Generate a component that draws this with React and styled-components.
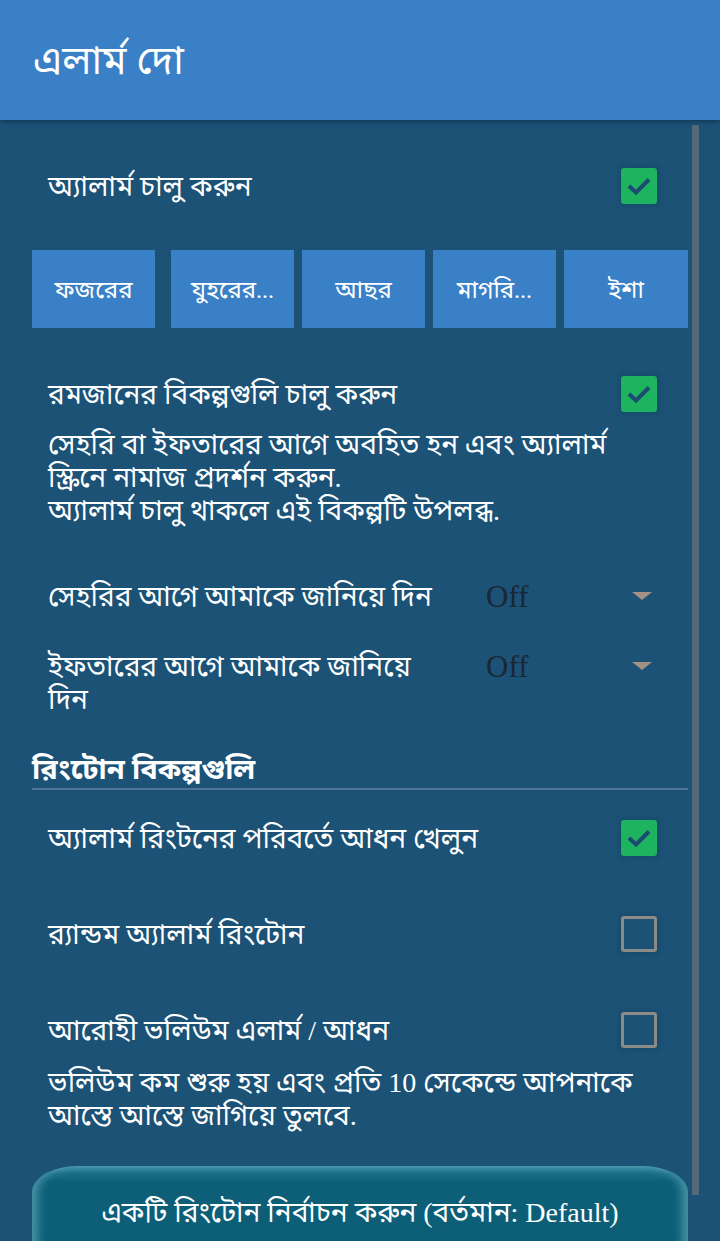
import React from "react";
import styled, { createGlobalStyle } from "styled-components";

const Global = createGlobalStyle`
  html, body { margin: 0; padding: 0; }
  body {
    background: #1b5276;
    font-family: "Liberation Serif", "Noto Sans Bengali", "Lohit Bengali", serif;
    color: #ffffff;
    overflow: hidden;
  }
`;

const Page = styled.div`
  width: 720px;
  height: 1241px;
  overflow: hidden;
  position: relative;
  background: #1b5276;
`;

const Header = styled.header`
  height: 120px;
  box-sizing: border-box;
  background: #3a80c6;
  display: flex;
  align-items: center;
  padding: 6px 0 0 33px;
  box-shadow: 0 2px 4px rgba(10, 30, 50, 0.45);
  position: relative;
  z-index: 2;
`;

const Title = styled.h1`
  margin: 0;
  font-size: 40px;
  font-weight: 400;
  color: #ffffff;
`;

const Scrollbar = styled.div`
  position: absolute;
  left: 692px;
  top: 125px;
  width: 7px;
  height: 1070px;
  background: #56697b;
`;

const Content = styled.main`
  padding: 0 32px;
  display: flex;
  flex-direction: column;
`;

const CheckRow = styled.div`
  height: 72px;
  margin-top: ${(p) => p.$top}px;
  display: flex;
  align-items: center;
  justify-content: space-between;
  padding: 0 31px 0 16px;
`;

const Label = styled.span`
  font-size: 28px;
  line-height: 33px;
  color: #ffffff;
`;

const Box = styled.span`
  width: 36px;
  height: 36px;
  box-sizing: border-box;
  border-radius: 3px;
  display: flex;
  align-items: center;
  justify-content: center;
  background: ${(p) => (p.$on ? "#1db35f" : "transparent")};
  border: ${(p) => (p.$on ? "none" : "3px solid #8c8a86")};
  box-shadow: 0 0 6px rgba(20, 40, 60, 0.35);
`;

const Check = ({ on }) => (
  <Box $on={on}>
    {on && (
      <svg width="26" height="20" viewBox="0 0 26 20">
        <path d="M3 10 L10 16.5 L23 3.5" fill="none" stroke="#1b4c70" strokeWidth="4" />
      </svg>
    )}
  </Box>
);

const Tabs = styled.div`
  margin-top: 28px;
  display: flex;
  gap: 8px;
`;

const Tab = styled.button`
  width: ${(p) => (p.$wide ? 124 : 123)}px;
  flex: none;
  height: 78px;
  margin-right: ${(p) => (p.$first ? 8 : 0)}px;
  border: none;
  background: #3a80c6;
  color: #ffffff;
  font-family: inherit;
  font-size: 24px;
  padding: 6px 6px 0;
  white-space: nowrap;
  overflow: hidden;
`;

const Description = styled.p`
  margin: ${(p) => p.$top}px 0 0;
  padding-left: 16px;
  font-size: 28px;
  line-height: 33px;
  color: #ffffff;
`;

const SelectRow = styled.div`
  margin-top: ${(p) => p.$top}px;
  display: grid;
  grid-template-columns: 438px 1fr;
  padding: 0 36px 0 16px;
  align-items: start;
`;

const Value = styled.div`
  display: flex;
  align-items: center;
  justify-content: space-between;
  height: 33px;
`;

const ValueText = styled.span`
  font-family: "Liberation Serif", serif;
  font-size: 31px;
  color: #1c2733;
`;

const Arrow = styled.span`
  width: 0;
  height: 0;
  border-left: 10px solid transparent;
  border-right: 10px solid transparent;
  border-top: 8px solid #a39184;
  margin-top: -2px;
`;

const SectionTitle = styled.h2`
  margin: 37px 0 0;
  font-size: 29px;
  line-height: 33px;
  font-weight: 700;
  color: #ffffff;
  padding-bottom: 2px;
  border-bottom: 2px solid #4d7696;
`;

const PickButton = styled.button`
  margin-top: 34px;
  height: 110px;
  border: none;
  font-family: inherit;
  font-size: 28px;
  color: #ffffff;
  display: flex;
  justify-content: center;
  padding-top: 30px;
  border-radius: 46px 46px 0 0 / 26px 26px 0 0;
  background: linear-gradient(180deg, #3f8fa6 0px, #1a6d86 8px, #0d5f78 16px, #0c5d76 100%);
  box-shadow:
    inset 10px 0 10px -4px rgba(120, 190, 205, 0.55),
    inset -10px 0 10px -4px rgba(120, 190, 205, 0.55);
`;

const prayers = ["ফজরের", "যুহরের...", "আছর", "মাগরি...", "ইশা"];

export default function App() {
  return (
    <Page>
      <Global />
      <Header>
        <Title>এলার্ম দো</Title>
      </Header>
      <Scrollbar />
      <Content>
        <CheckRow $top={30}>
          <Label>অ্যালার্ম চালু করুন</Label>
          <Check on />
        </CheckRow>

        <Tabs>
          {prayers.map((p, i) => (
            <Tab key={p} $first={i === 0} $wide={i === prayers.length - 1}>
              {p}
            </Tab>
          ))}
        </Tabs>

        <CheckRow $top={30}>
          <Label>রমজানের বিকল্পগুলি চালু করুন</Label>
          <Check on />
        </CheckRow>
        <Description $top={-2}>
          সেহরি বা ইফতারের আগে অবহিত হন এবং অ্যালার্ম
          <br />
          স্ক্রিনে নামাজ প্রদর্শন করুন.
          <br />
          অ্যালার্ম চালু থাকলে এই বিকল্পটি উপলব্ধ.
        </Description>

        <SelectRow $top={53}>
          <Label>সেহরির আগে আমাকে জানিয়ে দিন</Label>
          <Value>
            <ValueText>Off</ValueText>
            <Arrow />
          </Value>
        </SelectRow>
        <SelectRow $top={37}>
          <Label>
            ইফতারের আগে আমাকে জানিয়ে
            <br />
            দিন
          </Label>
          <Value>
            <ValueText>Off</ValueText>
            <Arrow />
          </Value>
        </SelectRow>

        <SectionTitle>রিংটোন বিকল্পগুলি</SectionTitle>

        <CheckRow $top={12}>
          <Label>অ্যালার্ম রিংটনের পরিবর্তে আধন খেলুন</Label>
          <Check on />
        </CheckRow>
        <CheckRow $top={24}>
          <Label>র‍্যান্ডম অ্যালার্ম রিংটোন</Label>
          <Check />
        </CheckRow>
        <CheckRow $top={24}>
          <Label>আরোহী ভলিউম এলার্ম / আধন</Label>
          <Check />
        </CheckRow>
        <Description $top={0}>
          ভলিউম কম শুরু হয় এবং প্রতি 10 সেকেন্ডে আপনাকে
          <br />
          আস্তে আস্তে জাগিয়ে তুলবে.
        </Description>

        <PickButton>একটি রিংটোন নির্বাচন করুন (বর্তমান: Default)</PickButton>
      </Content>
    </Page>
  );
}
